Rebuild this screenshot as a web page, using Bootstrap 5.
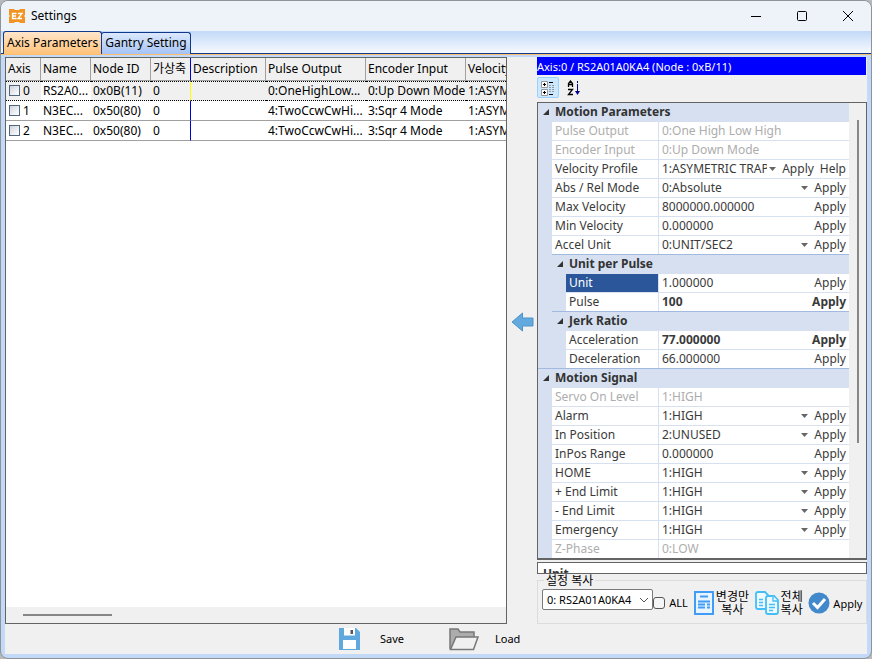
<!DOCTYPE html>
<html lang="ko">
<head>
<meta charset="utf-8">
<meta name="viewport" content="width=device-width, initial-scale=1">
<title>Settings</title>
<link href="https://cdn.jsdelivr.net/npm/bootstrap@5.3.0/dist/css/bootstrap.min.css" rel="stylesheet">
<style>
body{background:#b9b9bb;font:12px/18px "Noto Sans","Noto Sans CJK KR",sans-serif;color:#000}
button,input,select{font:inherit;color:inherit;border:0;background:none;padding:0;margin:0;min-width:0}
svg{display:block;flex:none}
.win{min-height:100vh;border:1px solid #8e9299;border-radius:8px;background:#c3d9f8;overflow:hidden}
.titlebar{height:30px;background:#eef3f9;padding-left:8px;gap:6px}
.titlebar .ctl{width:46px;height:30px;display:flex;align-items:center;justify-content:center;margin-left:-6px}
.titlebar .ctl:first-of-type{margin-left:0}
.tabstrip{height:24px;background:linear-gradient(#c3d9f8,#f8fbff);border-bottom:1px solid #ffbf6b;box-shadow:inset 0 -1px #10398c;padding-left:2px}
.tabstrip button{height:22px;border:1px solid #10398c;border-bottom:0;border-radius:3px 3px 0 0;background:linear-gradient(#dce9fc,#a5c3f5);padding:0 3px;margin-left:-1px;white-space:nowrap}
.tabstrip button.on{height:23px;background:linear-gradient(#ffe6cb,#ffc27a);margin-left:0}
.client{background:#f0f0f0;margin:2px 4px 4px}
.gridbox{border:1px solid #646464;background:#fff;overflow:hidden;min-width:0}
.axes{table-layout:fixed;width:560px;border-collapse:separate;border-spacing:0}
.axes th,.axes td{padding:0 0 0 2px;white-space:nowrap;overflow:hidden;font-weight:400;border-bottom:1px solid #a0a0a0;text-overflow:ellipsis}
.axes th{height:23px;background:#f0f0f0;border-right:1px solid #a0a0a0}
.axes td{height:20px;line-height:18px}
.axes th.vx,.axes td.vx{border-right:1px solid #0000d8;text-overflow:clip}
.axes tr.cur td{background:#f0f0f0;border-top:1px dotted #000;border-bottom:1px dotted #000}
.axes tr.cur td.vx{border-right-color:#ff0}
.axes tr.cur td.edit{background:#fff}
.axes input{appearance:none;width:11px;height:11px;border:1px solid #52657f;background:linear-gradient(135deg,#cfd5de,#fff);margin-left:1px;vertical-align:-1px}
.hscroll{height:16px;background:#f0f0f0;padding:7px 0 0 17px}
.hscroll div{width:89px;height:2px;background:#868686}
.arrowcol{width:30px;padding:0 0 38px 4px}
.side{width:330px}
.caption{height:18px;background:#00f;color:#fff;font-size:11px;line-height:19px;margin-right:1px}
.tools{height:27px;padding-top:2px}
.tools button{width:22px;height:21px;display:flex;align-items:center;justify-content:center}
.tools .on{background:#cce8ff;border:1px solid #99d1ff;border-radius:2px}
.pgrid{border:1px solid #646464;border-bottom-width:2px;background:#f0f0f0;color:#3a3a3a}
.rows{background:#d6e0f1;min-width:0}
.cat{display:flex;align-items:center;height:19px;line-height:16px;font-weight:700;color:#333;width:100%;padding:0 0 2px 4px;gap:5px}
.prow{display:flex;height:19px;margin-left:14px;background:#fff;border-bottom:1px solid #d6e0f1}
.prow label{width:106px;padding-left:3px;flex:none;white-space:nowrap}
.nest{margin-left:14px;border-top:1px solid #a3bae0;margin-top:-1px}
.nest .prow label{width:92px}
.prow .val{display:flex;flex:1;min-width:0;border-left:1px solid #d6e0f1;padding:0 3px}
.prow input,.prow select{flex:1;width:0;height:18px;background:#fff}
.prow select{appearance:none;padding-right:9px;background:#fff url("data:image/svg+xml,%3Csvg xmlns='http://www.w3.org/2000/svg' width='7' height='4'%3E%3Cpath d='M0 0h7L3.500 4z' fill='%23666'/%3E%3C/svg%3E") no-repeat right 0 top 7px}
.prow button{margin-left:6px;color:#3a3a3a;height:18px}
.prow.off label,.prow.off input{color:#adadad}
.prow.mod input,.prow.mod button{font-weight:700}
.prow.sel label{background:#2b579a;color:#fff}
.sec{border-top:1px solid #a3bae0;margin-top:-1px}
.sec .prow:last-child{height:18px;border-bottom:0}
.vscroll{width:17px;flex:none;padding:17px 0 0 8px}
.vscroll div{width:2px;height:323px;background:#868686}
.help{height:12px;margin-top:2px;border:1px solid #646464;background:#fff;overflow:hidden;padding:2px 5px 0;font-weight:700;color:#333}
.copybox{border:1px solid #dcdcdc;height:44px;margin-top:6px;position:relative;padding:8px 4px 0;font-size:11px}
.copybox legend{position:absolute;top:-7px;left:6px;width:auto;margin:0;padding:0 2px;background:#f0f0f0;font-size:12px;line-height:13px;float:none}
.copybox select{width:112px;height:21px;border:1px solid #7a7a7a;border-radius:2px;padding-left:4px;appearance:none;background:#fff url("data:image/svg+xml,%3Csvg xmlns='http://www.w3.org/2000/svg' width='10' height='6'%3E%3Cpath d='M1 1l4 4 4-4' fill='none' stroke='%23555'/%3E%3C/svg%3E") no-repeat right 3px center}
.copybox label{padding-top:5px}
.copybox input{appearance:none;width:12px;height:12px;border:1px solid #555;border-radius:3px;background:#f6f6f6;margin-right:4px}
.copybox button{display:flex;align-items:center;gap:2px;line-height:13px;font-size:12px;white-space:nowrap;margin:1px 0 0 6px}
.copybox .go{font-size:11px;padding-top:2px;gap:3px}
.actions{height:30px;font-size:11px;padding-left:26px}
.actions button{display:flex;align-items:center;width:111px}
</style>
<script src="https://cdn.jsdelivr.net/npm/bootstrap@5.3.0/dist/js/bootstrap.bundle.min.js"></script>
</head>
<body>
<div class="win d-flex flex-column">
  <header class="titlebar d-flex align-items-center">
    <svg width="16" height="16" viewBox="0 0 16 16"><path d="M0 1h5l1 1h4l1-1h5v6l-1 1 1 1v6h-5l-1-1H6l-1 1H0V9l1-1-1-1z" fill="#f29423"/><path d="M7.500 5.500H3.500v5h4M3.500 8h3.500M9 5.500h4l-4 5h4" fill="none" stroke="#fff" stroke-width="1.300"/></svg>
    <span class="me-auto">Settings</span>
    <button class="ctl" type="button" aria-label="Minimize"><svg width="10" height="10"><path d="M0 5.500h10" stroke="#000"/></svg></button>
    <button class="ctl" type="button" aria-label="Maximize"><svg width="10" height="10"><rect x=".5" y=".5" width="9" height="9" rx="1" fill="none" stroke="#000"/></svg></button>
    <button class="ctl" type="button" aria-label="Close"><svg width="10" height="10"><path d="M0 0l10 10M10 0L0 10" stroke="#000"/></svg></button>
  </header>
  <nav class="tabstrip d-flex align-items-end" role="tablist">
    <button class="on" type="button" role="tab" aria-selected="true">Axis Parameters</button>
    <button type="button" role="tab" aria-selected="false" class="align-self-center">Gantry Setting</button>
  </nav>
  <main class="client d-flex flex-column flex-grow-1">
    <div class="d-flex flex-grow-1">
      <section class="gridbox d-flex flex-column flex-grow-1">
        <table class="axes">
          <colgroup><col style="width:35px"><col style="width:50px"><col style="width:60px"><col style="width:40px"><col style="width:75px"><col style="width:100px"><col style="width:100px"><col style="width:100px"></colgroup>
          <thead><tr><th>Axis</th><th>Name</th><th>Node ID</th><th class="vx">가상축</th><th>Description</th><th>Pulse Output</th><th>Encoder Input</th><th>Velocity Profile</th></tr></thead>
          <tbody>
            <tr class="cur"><td><label><input type="checkbox"> 0</label></td><td class="edit">RS2A0...</td><td>0x0B(11)</td><td class="vx">0</td><td></td><td>0:OneHighLow...</td><td>0:Up Down Mode</td><td>1:ASYMETRIC</td></tr>
            <tr><td><label><input type="checkbox"> 1</label></td><td>N3EC...</td><td>0x50(80)</td><td class="vx">0</td><td></td><td>4:TwoCcwCwHi...</td><td>3:Sqr 4 Mode</td><td>1:ASYMETRIC</td></tr>
            <tr><td><label><input type="checkbox"> 2</label></td><td>N3EC...</td><td>0x50(80)</td><td class="vx">0</td><td></td><td>4:TwoCcwCwHi...</td><td>3:Sqr 4 Mode</td><td>1:ASYMETRIC</td></tr>
          </tbody>
        </table>
        <div class="hscroll mt-auto"><div></div></div>
      </section>
      <div class="arrowcol d-flex align-items-center flex-shrink-0">
        <button type="button" aria-label="Copy to list"><svg width="23" height="20" viewBox="0 0 23 20"><path d="M1 10L11.500 1v5H22v8H11.500v5z" fill="#62a9de" stroke="#4d94cb"/></svg></button>
      </div>
      <aside class="side flex-shrink-0">
        <div class="caption">Axis:0 / RS2A01A0KA4 (Node : 0xB/11)</div>
        <div class="tools d-flex gap-1">
          <button class="on" type="button" aria-label="Categorized"><svg width="15" height="16" viewBox="0 0 15 16"><path d="M.5 1.500h6v6h-6zM.5 9.500h6v6h-6z" fill="#fff" stroke="#999"/><path d="M2 4.500h3M3.500 3v3M2 12.500h3M3.500 11v3M8 2.500h4M8 14.500h4" stroke="#000"/><path d="M8 5.500h6M8 7.500h6M8 9.500h6M8 11.500h6" stroke="#999" stroke-dasharray="2 1"/></svg></button>
          <button type="button" aria-label="Alphabetical"><svg width="14" height="16" viewBox="0 0 14 16"><path d="M1.500 7V3.500L3.500 1l2 2.500V7M1.500 4.500h4M1 9.500h4.500L1.500 14.500H6" fill="none" stroke="#000" stroke-width="1.300"/><path d="M10.500 1v5" stroke="#00008b" stroke-dasharray="2 1"/><path d="M10.500 5v7" stroke="#00008b"/><path d="M8 11h5l-2.500 4z" fill="#00008b"/></svg></button>
        </div>
        <div class="pgrid d-flex">
          <div class="rows flex-grow-1">
            <button class="cat" type="button"><svg width="8" height="8"><path d="M7 1v6H1z" fill="#333"/></svg>Motion Parameters</button>
            <div class="prow off"><label for="p1">Pulse Output</label><div class="val"><input id="p1" disabled value="0:One High Low High"></div></div>
            <div class="prow off"><label for="p2">Encoder Input</label><div class="val"><input id="p2" disabled value="0:Up Down Mode"></div></div>
            <div class="prow"><label for="p3">Velocity Profile</label><div class="val"><select id="p3"><option>1:ASYMETRIC TRAPEZOIDE</option></select><button type="button">Apply</button><button type="button">Help</button></div></div>
            <div class="prow"><label for="p4">Abs / Rel Mode</label><div class="val"><select id="p4"><option>0:Absolute</option></select><button type="button">Apply</button></div></div>
            <div class="prow"><label for="p5">Max Velocity</label><div class="val"><input id="p5" value="8000000.000000"><button type="button">Apply</button></div></div>
            <div class="prow"><label for="p6">Min Velocity</label><div class="val"><input id="p6" value="0.000000"><button type="button">Apply</button></div></div>
            <div class="prow"><label for="p7">Accel Unit</label><div class="val"><select id="p7"><option>0:UNIT/SEC2</option></select><button type="button">Apply</button></div></div>
            <div class="nest">
              <button class="cat" type="button"><svg width="8" height="8"><path d="M7 1v6H1z" fill="#333"/></svg>Unit per Pulse</button>
              <div class="prow sel"><label for="p8">Unit</label><div class="val"><input id="p8" value="1.000000"><button type="button">Apply</button></div></div>
              <div class="prow mod"><label for="p9">Pulse</label><div class="val"><input id="p9" value="100"><button type="button">Apply</button></div></div>
            </div>
            <div class="nest">
              <button class="cat" type="button"><svg width="8" height="8"><path d="M7 1v6H1z" fill="#333"/></svg>Jerk Ratio</button>
              <div class="prow mod"><label for="p10">Acceleration</label><div class="val"><input id="p10" value="77.000000"><button type="button">Apply</button></div></div>
              <div class="prow"><label for="p11">Deceleration</label><div class="val"><input id="p11" value="66.000000"><button type="button">Apply</button></div></div>
            </div>
            <div class="sec">
              <button class="cat" type="button"><svg width="8" height="8"><path d="M7 1v6H1z" fill="#333"/></svg>Motion Signal</button>
              <div class="prow off"><label for="p12">Servo On Level</label><div class="val"><input id="p12" disabled value="1:HIGH"></div></div>
              <div class="prow"><label for="p13">Alarm</label><div class="val"><select id="p13"><option>1:HIGH</option></select><button type="button">Apply</button></div></div>
              <div class="prow"><label for="p14">In Position</label><div class="val"><select id="p14"><option>2:UNUSED</option></select><button type="button">Apply</button></div></div>
              <div class="prow"><label for="p15">InPos Range</label><div class="val"><input id="p15" value="0.000000"><button type="button">Apply</button></div></div>
              <div class="prow"><label for="p16">HOME</label><div class="val"><select id="p16"><option>1:HIGH</option></select><button type="button">Apply</button></div></div>
              <div class="prow"><label for="p17">+ End Limit</label><div class="val"><select id="p17"><option>1:HIGH</option></select><button type="button">Apply</button></div></div>
              <div class="prow"><label for="p18">- End Limit</label><div class="val"><select id="p18"><option>1:HIGH</option></select><button type="button">Apply</button></div></div>
              <div class="prow"><label for="p19">Emergency</label><div class="val"><select id="p19"><option>1:HIGH</option></select><button type="button">Apply</button></div></div>
              <div class="prow off"><label for="p20">Z-Phase</label><div class="val"><input id="p20" disabled value="0:LOW"></div></div>
            </div>
          </div>
          <div class="vscroll"><div></div></div>
        </div>
        <div class="help">Unit</div>
        <fieldset class="copybox d-flex align-items-start">
          <legend>설정 복사</legend>
          <select aria-label="설정 복사"><option>0: RS2A01A0KA4</option></select>
          <label class="d-flex align-items-center"><input type="checkbox">ALL</label>
          <button type="button"><svg width="20" height="24" viewBox="0 0 20 24"><rect x="1" y="1" width="18" height="22" fill="#e9f4ff" stroke="#3f9cf7" stroke-width="2"/><path d="M6 5.500h8M4 10.500h12M4 13.500h7M4 16.500h7M13 13.500h3M13 16.500h3" stroke="#3f9cf7" stroke-width="2"/></svg><span>변경만<br>복사</span></button>
          <button type="button"><svg width="24" height="24" viewBox="0 0 24 24"><g fill="#eefaff" stroke="#45bdf5" stroke-width="1.800"><path d="M3 1h7l4 4v13H3q-2 0-2-2V3q0-2 2-2z"/><path d="M13 5h6l4 4v12q0 2-2 2h-8q-2 0-2-2V7q0-2 2-2z"/><path d="M18 5v5h5M14 13.500h6M14 16.500h6M14 19.500h4M4 8.500h4M4 11.500h4M4 14.500h4" stroke-width="1.300"/></g></svg><span>전체<br>복사</span></button>
          <button type="button" class="go"><svg width="22" height="22" viewBox="0 0 22 22"><circle cx="11" cy="11" r="10.500" fill="#4189cb"/><path d="M5 11l4.500 4.500L17 7" fill="none" stroke="#fff" stroke-width="3"/></svg><span>Apply</span></button>
        </fieldset>
      </aside>
    </div>
    <footer class="actions d-flex justify-content-center">
      <button type="button"><svg class="me-1" width="22" height="22" viewBox="0 0 22 22"><path d="M1 0h17l4 4v18H1z" fill="#5fa9de"/><path d="M6 0h11v7.500H6zM5 12h13v9H5z" fill="#fff"/><path d="M12.500 2H15v4h-2.500z" fill="#555"/></svg><span class="ms-3">Save</span></button>
      <button type="button"><svg width="30" height="23" viewBox="0 0 30 23"><path d="M1 21V1h8l2 3h14v5" fill="#acacac" stroke="#777" stroke-width="1.500"/><path d="M7 9h22l-4.500 12.500H1.500z" fill="#f0f0f0" stroke="#777" stroke-width="1.500"/></svg><span class="ms-3">Load</span></button>
    </footer>
  </main>
</div>
</body>
</html>
